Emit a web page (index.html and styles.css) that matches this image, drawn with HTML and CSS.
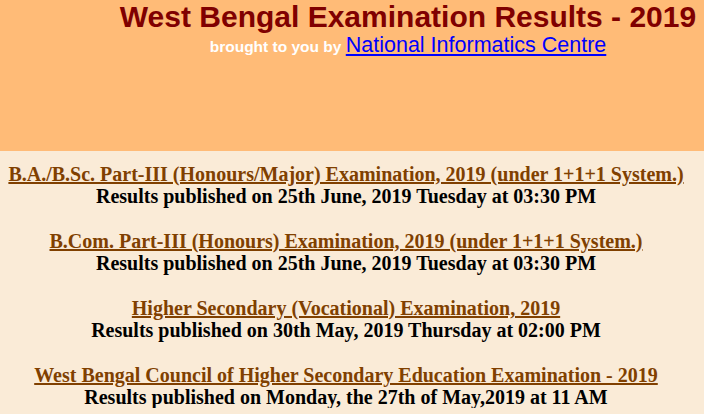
FILE: index.html
```html
<!DOCTYPE html>
<html>
<head>
<meta charset="utf-8">
<title>West Bengal Examination Results - 2019</title>
<link rel="stylesheet" href="styles.css">
</head>
<body>
<header class="banner">
  <h1 class="title">West Bengal Examination Results - 2019</h1>
  <div class="byline">brought to you by <a class="nic" href="#">National Informatics Centre</a></div>
</header>
<main class="list">
  <div class="item">
    <a class="exam" href="#">B.A./B.Sc. Part-III (Honours/Major) Examination, 2019 (under 1+1+1 System.)</a>
    <div class="when">Results published on 25th June, 2019 Tuesday at 03:30 PM</div>
  </div>
  <div class="item">
    <a class="exam" href="#">B.Com. Part-III (Honours) Examination, 2019 (under 1+1+1 System.)</a>
    <div class="when">Results published on 25th June, 2019 Tuesday at 03:30 PM</div>
  </div>
  <div class="item">
    <a class="exam" href="#">Higher Secondary (Vocational) Examination, 2019</a>
    <div class="when">Results published on 30th May, 2019 Thursday at 02:00 PM</div>
  </div>
  <div class="item">
    <a class="exam" href="#">West Bengal Council of Higher Secondary Education Examination - 2019</a>
    <div class="when">Results published on Monday, the 27th of May,2019 at 11 AM</div>
  </div>
</main>
</body>
</html>
```
FILE: styles.css
```css
html, body {
  margin: 0;
  padding: 0;
  background: #faebd7;
  overflow: hidden;
}
.banner {
  background: #ffbb77;
  height: 151px;
  padding-left: 112px;
  text-align: center;
  font-family: "Liberation Sans", Arial, sans-serif;
  box-sizing: border-box;
  padding-top: 1px;
}
.title {
  margin: 0;
  font-size: 30px;
  line-height: 32px;
  font-weight: bold;
  color: #800000;
}
.byline {
  color: #ffffff;
  font-weight: bold;
  font-size: 15.5px;
  line-height: 24px;
}
.nic {
  color: #0000ff;
  font-weight: normal;
  font-size: 21.5px;
}
.list {
  padding: 12px 12px 0 0;
  text-align: center;
  font-family: "Liberation Serif", "Times New Roman", serif;
  font-size: 20px;
  font-weight: bold;
  line-height: 22px;
  display: flex;
  flex-direction: column;
  gap: 23px;
}
.exam {
  color: #804000;
}
.when {
  color: #000000;
}
```
